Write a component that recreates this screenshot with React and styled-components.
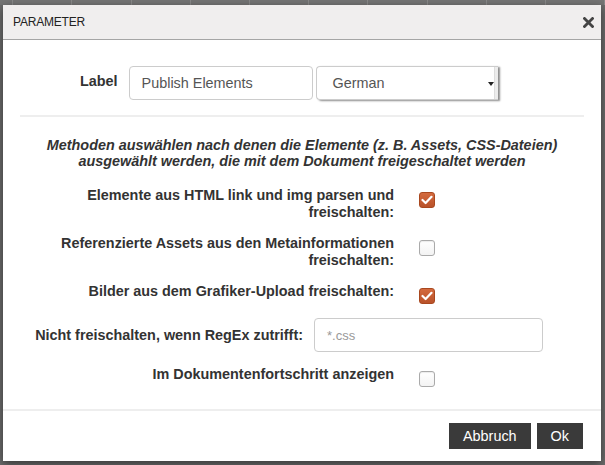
import React from 'react'
import styled, { createGlobalStyle } from 'styled-components'

const GlobalStyle = createGlobalStyle`
  html, body {
    margin: 0;
    padding: 0;
    background: #6c6c6c;
    font-family: "Liberation Sans", Arial, sans-serif;
  }
`;

export default function App() {
  const cells = Array.from({ length: 11 });
  return (
    <>
      <GlobalStyle />
      <Backdrop>
        <Strip>
          {cells.map((_, i) => <StripCell key={i} />)}
        </Strip>
        <Modal>
          <Header>
            <Title>PARAMETER</Title>
            <Close aria-label="close">
              <svg width="11" height="11" viewBox="0 0 11 11">
                <path d="M1.5 1.5 L9.5 9.5 M9.5 1.5 L1.5 9.5" stroke="#444" strokeWidth="2.8" strokeLinecap="square" />
              </svg>
            </Close>
          </Header>
          <Body>
            <LabelRow>
              <FieldLabel>Label</FieldLabel>
              <TextInput>Publish Elements</TextInput>
              <Select>
                <span>German</span>
                <Caret />
              </Select>
            </LabelRow>
            <Divider />
            <Intro>
              Methoden auswählen nach denen die Elemente (z. B. Assets, CSS-Dateien)
              <br />
              ausgewählt werden, die mit dem Dokument freigeschaltet werden
            </Intro>
            <Rows>
              <CheckRow>
                <RowLabel>Elemente aus HTML link und img parsen und freischalten:</RowLabel>
                <Checkbox checked />
              </CheckRow>
              <CheckRow>
                <RowLabel>Referenzierte Assets aus den Metainformationen freischalten:</RowLabel>
                <Checkbox />
              </CheckRow>
              <CheckRow>
                <RowLabel>Bilder aus dem Grafiker-Upload freischalten:</RowLabel>
                <Checkbox checked />
              </CheckRow>
              <RegexRow>
                <RowLabel>Nicht freischalten, wenn RegEx zutrifft:</RowLabel>
                <TextInput placeholder>*.css</TextInput>
              </RegexRow>
              <CheckRow>
                <RowLabel>Im Dokumentenfortschritt anzeigen</RowLabel>
                <Checkbox />
              </CheckRow>
            </Rows>
          </Body>
          <Footer>
            <Button>Abbruch</Button>
            <Button>Ok</Button>
          </Footer>
        </Modal>
      </Backdrop>
    </>
  )
}

function Checkbox({ checked }) {
  return (
    <Box checked={checked}>
      {checked &&
        <svg width="12" height="10" viewBox="0 0 12 10">
          <path d="M1.5 5 L4.6 8 L10.5 1.8" fill="none" stroke="#fff" strokeWidth="2.2" strokeLinecap="round" strokeLinejoin="round" />
        </svg>}
    </Box>
  )
}

const Backdrop = styled.div`
  position: relative;
  width: 605px;
  height: 465px;
  overflow: hidden;
  background: #6c6c6c;
`;
const Strip = styled.div`
  display: flex;
  height: 5px;
  margin-left: -46px;
`;
const StripCell = styled.div`
  width: 60px;
  border-right: 1px solid #8a8a8a;
  background: #757575;
`;
const Modal = styled.div`
  position: absolute;
  left: 3px;
  top: 5px;
  width: 598px;
  height: 456px;
  background: #fff;
  display: flex;
  flex-direction: column;
  box-shadow: 0 3px 9px rgba(0, 0, 0, 0.5);
`;
const Header = styled.div`
  display: flex;
  align-items: center;
  justify-content: space-between;
  height: 34px;
  padding: 0 7px 0 10px;
  background: #f0eeee;
  border-bottom: 1px solid #a5a5a5;
`;
const Title = styled.span`
  font-size: 12px;
  color: #222;
  letter-spacing: -0.2px;
`;
const Close = styled.span`
  display: flex;
  align-items: center;
  margin-top: 1px;
`;
const Body = styled.div`
  flex: 1;
  padding: 26px 14px 0;
  color: #333;
`;
const LabelRow = styled.div`
  display: flex;
  align-items: center;
  padding-left: 63px;
`;
const FieldLabel = styled.label`
  font-size: 14.4px;
  font-weight: 700;
  margin-right: 11px;
  margin-top: -4px;
`;
const TextInput = styled.div`
  box-sizing: border-box;
  display: flex;
  align-items: center;
  width: ${({ placeholder }) => placeholder ? '229px' : '184px'};
  height: 34px;
  padding: 0 12px;
  border: 1px solid #ccc;
  border-radius: 4px;
  font-size: ${({ placeholder }) => placeholder ? '13px' : '14.4px'};
  color: ${({ placeholder }) => placeholder ? '#999' : '#555'};
`;
const Select = styled.div`
  box-sizing: border-box;
  position: relative;
  display: flex;
  align-items: center;
  width: 182px;
  height: 34px;
  margin-left: 3px;
  padding: 0 16px;
  border: 1px solid #ccc;
  border-right: none;
  border-radius: 4px 0 0 4px;
  font-size: 14.4px;
  color: #555;
  box-shadow: inset -3px 0 0 #ececec, inset -4px 0 0 #ddd, 2px 1px 2px rgba(0, 0, 0, 0.45);
`;
const Caret = styled.span`
  position: absolute;
  right: 4px;
  top: 15px;
  border-left: 3px solid transparent;
  border-right: 3px solid transparent;
  border-top: 4px solid #222;
`;
const Divider = styled.hr`
  margin: 15px 3px 0;
  border: none;
  height: 2px;
  background: #eee;
`;
const Intro = styled.p`
  margin: 20px 0 18px;
  text-align: center;
  font-size: 14.4px;
  line-height: 16px;
  font-weight: 700;
  font-style: italic;
  color: #333;
`;
const Rows = styled.div`
  display: flex;
  flex-direction: column;
  gap: 14px;
`;
const CheckRow = styled.div`
  display: grid;
  grid-template-columns: 377px 16px;
  column-gap: 25px;
  align-items: start;
`;
const RegexRow = styled.div`
  display: grid;
  grid-template-columns: 286px 229px;
  column-gap: 11px;
  align-items: center;
`;
const RowLabel = styled.label`
  text-align: right;
  font-size: 14.4px;
  line-height: 17px;
  font-weight: 700;
  color: #333;
`;
const Box = styled.span`
  box-sizing: border-box;
  display: flex;
  align-items: center;
  justify-content: center;
  width: 16px;
  height: 16px;
  margin-top: 5px;
  border-radius: 3px;
  border: 1px solid ${({ checked }) => checked ? '#a9481f' : '#aaa'};
  background: ${({ checked }) => checked ? 'linear-gradient(#d46a3e, #b9522a)' : 'linear-gradient(#fff, #f3f3f3)'};
  box-shadow: ${({ checked }) => checked ? 'none' : 'inset 0 1px 1px rgba(0,0,0,0.08)'};
`;
const Footer = styled.div`
  display: flex;
  justify-content: flex-end;
  gap: 6px;
  padding: 12px 18px 12px;
  border-top: 2px solid #eee;
`;
const Button = styled.button`
  height: 26px;
  padding: 0 14px;
  border: none;
  border-radius: 0;
  background: #3a3a3a;
  color: #fff;
  font-family: "Liberation Sans", Arial, sans-serif;
  font-size: 14.4px;
`;
